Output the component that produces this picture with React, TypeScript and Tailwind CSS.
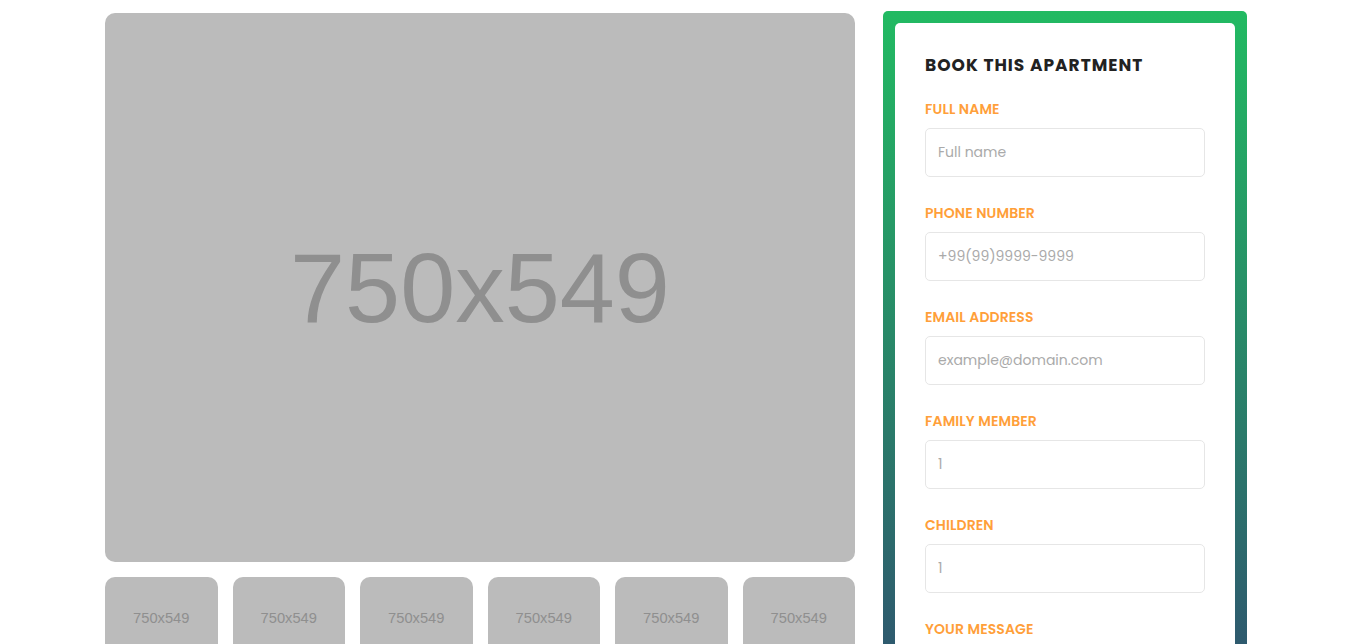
import React from "react";

const fields = [
  { label: "FULL NAME", ph: "Full name" },
  { label: "PHONE NUMBER", ph: "+99(99)9999-9999" },
  { label: "EMAIL ADDRESS", ph: "example@domain.com" },
  { label: "FAMILY MEMBER", ph: "1" },
  { label: "CHILDREN", ph: "1" },
];

const font = { fontFamily: "Poppins, Inter, 'Noto Sans', sans-serif" };

export default function App() {
  return (
    <div className="min-h-screen bg-white">
      <div className="flex gap-[28px] pl-[105px] pt-[11px]">
        <div className="w-[750px] shrink-0 mt-[2px]">
          <div className="h-[549px] rounded-[10px] bg-[#bbbbbb] flex items-center justify-center">
            <span
              className="text-[99px] leading-none text-[#8f8f8f]"
              style={{ fontFamily: "'Liberation Sans', Arial, sans-serif" }}
            >
              750x549
            </span>
          </div>
          <div className="mt-[15px] grid grid-cols-6 gap-[15px]">
            {Array.from({ length: 6 }).map((_, i) => (
              <div
                key={i}
                className="aspect-[750/549] rounded-[10px] bg-[#bbbbbb] flex items-center justify-center"
              >
                <span
                  className="text-[14.7px] leading-none text-[#8f8f8f]"
                  style={{ fontFamily: "'Liberation Sans', Arial, sans-serif" }}
                >
                  750x549
                </span>
              </div>
            ))}
          </div>
        </div>
        <div className="w-[364px] shrink-0 rounded-[5px] p-[12px] bg-[linear-gradient(to_bottom,#22ba62_0px,#2e5a6e_633px,#314d72_900px)]">
          <div className="rounded-[5px] bg-white px-[30px] pt-[30px] pb-[40px]" style={font}>
            <h3 className="text-[17px] leading-[24px] font-bold tracking-[1px] text-[#222222] mb-[22px]">
              BOOK THIS APARTMENT
            </h3>
            {fields.map((f) => (
              <div key={f.label} className="mb-[26px]">
                <div className="text-[14px] leading-[20px] font-semibold tracking-[0.1px] text-[#ff9f3a] mb-[9px]">
                  {f.label}
                </div>
                <input
                  className="block w-full h-[49px] rounded-[5px] border border-[#e6e6e6] px-[12px] text-[14px] text-[#999] placeholder:text-[#aaaaaa] outline-none"
                  placeholder={f.ph}
                  style={font}
                />
              </div>
            ))}
            <div className="text-[14px] leading-[20px] font-semibold tracking-[0.1px] text-[#ff9f3a] mb-[9px]">
              YOUR MESSAGE
            </div>
            <textarea
              className="block w-full h-[120px] rounded-[5px] border border-[#e6e6e6] p-[12px] text-[14px] outline-none placeholder:text-[#aaaaaa]"
              placeholder="Message"
              style={font}
            />
            <button className="mt-[26px] w-full h-[49px] rounded-[5px] bg-[#22ba62] text-white font-semibold text-[14px]">
              BOOK NOW
            </button>
          </div>
        </div>
      </div>
    </div>
  );
}
